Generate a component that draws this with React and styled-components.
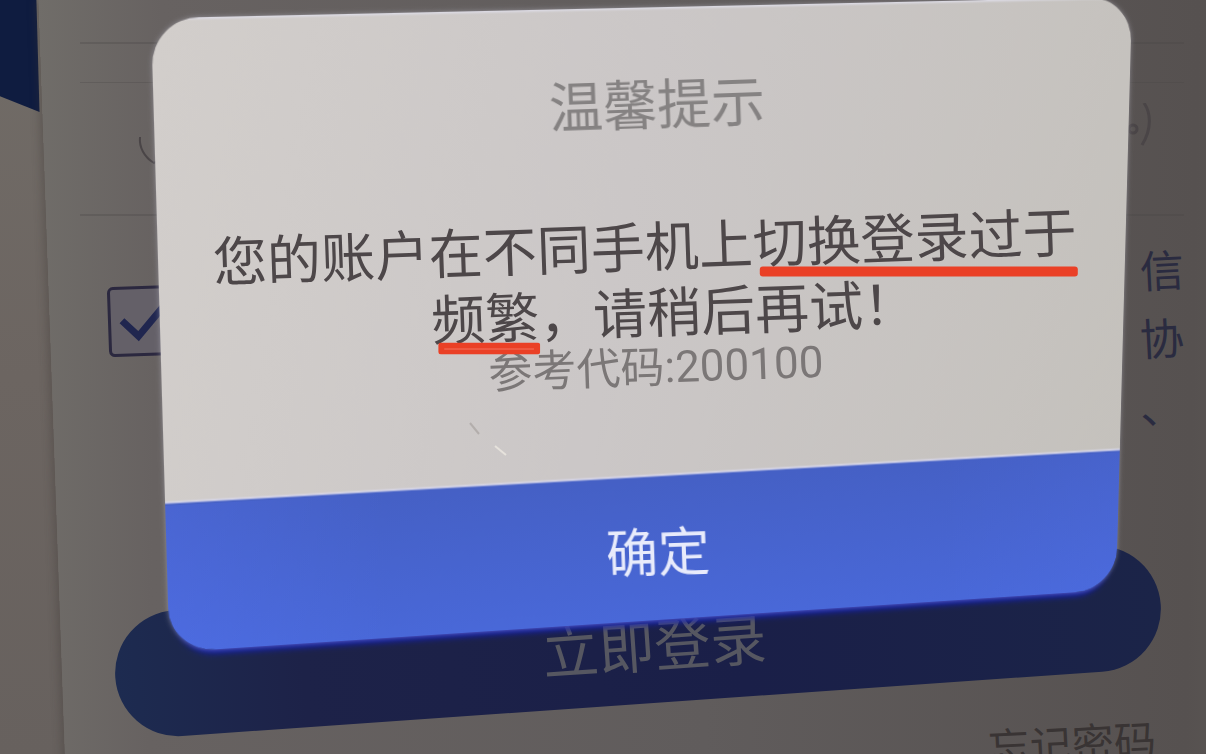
import React from 'react';
import styled, { createGlobalStyle } from 'styled-components';

const GlobalStyle = createGlobalStyle`
    * {
        box-sizing: border-box;
    }
    body {
        margin: 0;
        background: #5f5b5a;
        font-family: Roboto, 'Noto Sans CJK SC', sans-serif;
    }
    h2, p {
        margin: 0;
        font-weight: 400;
    }
    button {
        border: none;
        font-family: inherit;
        cursor: pointer;
    }
`;

const Stage = styled.main`
    position: relative;
    display: grid;
    grid-template-columns: 52px 1fr;
    height: 100vh;
    overflow: hidden;
    background: linear-gradient(180deg, #716c67, #6c6561 50%, #67615e);
`;

const Gutter = styled.div`
    height: 112px;
    background: #0f1c40;
    clip-path: polygon(0 0, 70% 0, 76% 100%, 0 86%);
`;

const LoginPage = styled.section`
    position: relative;
    display: flex;
    flex-direction: column;
    min-width: 0;
    padding: 0 22px 0 28px;

    &::before {
        content: '';
        position: absolute;
        inset: 0 -40px 0 0;
        background: linear-gradient(93deg, #706d69, #676261 10%, #605c5c 55%, #565150 94%, #5c5854);
        box-shadow: -3px 0 8px rgba(60, 54, 52, 0.35);
        transform: skewX(2deg);
    }
    > * {
        position: relative;
    }
`;

const Field = styled.label`
    display: flex;
    align-items: center;
    justify-content: space-between;
    height: ${({ $tall }) => ($tall ? 134 : 44)}px;
    margin-top: ${({ $tall }) => ($tall ? 38 : 0)}px;
    padding: 0 28px 0 56px;
    border-bottom: 2px solid rgba(74, 68, 68, 0.3);
    border-top: ${({ $tall }) => ($tall ? '1px solid rgba(74, 68, 68, 0.3)' : 'none')};
    color: #4a4547;

    input {
        flex: 1;
        min-width: 0;
        border: none;
        outline: none;
        background: none;
        font-size: 42px;
    }
`;

const Agreement = styled.div`
    display: flex;
    align-items: flex-start;
    justify-content: space-between;
    margin-top: 22px;
    padding-left: 28px;
`;

const CheckBox = styled.span`
    display: grid;
    width: 70px;
    height: 70px;
    margin-top: 48px;
    transform: rotate(-2deg);

    > * {
        grid-area: 1 / 1;
        width: 100%;
        height: 100%;
    }
    input {
        appearance: none;
        margin: 0;
        border: 3px solid #2b283f;
        border-radius: 6px;
        background: #646068;
    }
    svg {
        pointer-events: none;
    }
`;

const Terms = styled.label`
    color: #2a2b40;
    font-size: 44px;
    line-height: 68px;
    text-align: right;

    span {
        display: block;
        transform: rotate(-3deg);
    }
`;

const LoginButton = styled.button`
    height: 126px;
    margin: 136px 22px 0 34px;
    padding: 4px 0 0 32px;
    border-radius: 63px;
    background: linear-gradient(90deg, #1d2b50, #1d2248 18%, #1a1f48 60%, #1b2448);
    color: #565761;
    font-size: 56px;
    font-weight: 400;
    transform: rotate(-4deg);
`;

const ForgotLink = styled.a`
    align-self: flex-end;
    margin: 16px 28px 0 0;
    color: #393434;
    font-size: 42px;
    line-height: 52px;
    text-decoration: none;
    white-space: nowrap;
    transform: rotate(-3deg);
`;

const Overlay = styled.div`
    position: absolute;
    inset: 0;
    padding: 12px 64px 0 176px;
`;

const Dialog = styled.div`
    position: relative;
    display: flex;
    flex-direction: column;
    padding-right: 26px;
    text-align: center;

    /* the card is seen at an angle, its text stays flat */
    &::before {
        content: '';
        position: absolute;
        inset: 0;
        border-radius: 44px;
        background:
            linear-gradient(180deg, #dddce6 0, transparent 3px),
            linear-gradient(90deg, rgba(90, 120, 255, 0.22), transparent 22%, transparent 80%, rgba(90, 120, 255, 0.12)) 0 100% / 100% 146px no-repeat,
            linear-gradient(180deg, transparent 463px, #d9d8ea 465px, #4560c5 467px, #4968d8),
            linear-gradient(100deg, #d2cecb, #cbc7c7 45%, #c4c1bc);
        box-shadow: 0 0 5px rgba(190, 190, 205, 0.5), 0 11px 6px -7px #1420b0;
        transform: skewY(-2.2deg) perspective(1200px) rotateX(-4deg) rotateY(5deg);
    }
    > * {
        position: relative;
    }
`;

const Title = styled.h2`
    padding: 60px 0 0 20px;
    color: #858282;
    font-size: 54px;
    line-height: 70px;
    transform: rotate(-2deg);
`;

const Message = styled.p`
    z-index: 1;
    margin-top: 74px;
    color: #4d4749;
    font-size: 54px;
    line-height: 66px;
    white-space: nowrap;
    transform: rotate(-2deg);
`;

const Line = styled.span`
    display: block;
    padding-left: ${({ $indent }) => ($indent ? '1em' : 0)};
`;

const Marked = styled.span`
    position: relative;

    &::after {
        content: '';
        position: absolute;
        z-index: 1;
        top: ${({ $double }) => ($double ? 54 : 59)}px;
        left: 6px;
        right: 0;
        height: ${({ $double }) => ($double ? 12 : 10)}px;
        border-radius: 3px;
        background: ${({ $double }) =>
            $double
                ? 'linear-gradient(#f4705c, #f4705c) 50% 50% / 88% 1px no-repeat #ea4026'
                : '#ea4026'};
        transform: rotate(2deg);
    }
`;

const Code = styled.p`
    padding-left: 20px;
    color: #7b7777;
    font-size: 44px;
    line-height: 40px;
    transform: rotate(-2deg);
`;

const ConfirmButton = styled.button`
    height: 146px;
    margin-top: 92px;
    padding: 0 0 8px 24px;
    background: none;
    color: #e8ebfb;
    font-size: 52px;
    transform: rotate(-2deg);
`;

/* scratch on the glass below the message */
const Scratch = styled.svg`
    && {
        position: absolute;
    }
    top: 66%;
    left: 30%;
    width: 44px;
    height: 40px;
`;

function App() {
    return (
        <>
            <GlobalStyle />
            <Stage>
                <Gutter />
                <LoginPage>
                    <Field>
                        <input type="text" aria-label="账户" />
                    </Field>
                    <Field $tall>
                        <svg width="36" height="44" viewBox="0 0 36 44" fill="none" stroke="currentColor" strokeWidth="2">
                            <path d="M4 10C3 20 8 30 18 36c10-6 16-18 14-26" />
                        </svg>
                        <input type="password" aria-label="密码" />
                        <svg width="36" height="92" viewBox="0 0 36 92" fill="none" stroke="currentColor" strokeWidth="3">
                            <path d="M24 0c7 10 8 26-2 42" />
                            <circle cx="13" cy="26" r="4" />
                        </svg>
                    </Field>
                    <Agreement>
                        <CheckBox>
                            <input id="agree" type="checkbox" defaultChecked />
                            <svg viewBox="0 0 70 70" fill="none" stroke="#20264f" strokeWidth="7">
                                <path d="M14 34l16 16 26-29" />
                            </svg>
                        </CheckBox>
                        <Terms htmlFor="agree">
                            <span>信</span>
                            <span>协</span>
                            <span>、</span>
                        </Terms>
                    </Agreement>
                    <LoginButton type="button">立即登录</LoginButton>
                    <ForgotLink href="#forgot">忘记密码</ForgotLink>
                </LoginPage>
                <Overlay>
                    <Dialog role="alertdialog" aria-labelledby="dialog-title">
                        <Title id="dialog-title">温馨提示</Title>
                        <Message>
                            <Line>
                                您的账户在不同手机上<Marked>切换登录过于</Marked>
                            </Line>
                            <Line $indent>
                                <Marked $double>频繁</Marked>，请稍后再试！
                            </Line>
                        </Message>
                        <Code>参考代码:200100</Code>
                        <Scratch viewBox="0 0 44 40" fill="none" strokeWidth="2">
                            <path d="M4 6l9 11" stroke="#b3aeac" />
                            <path d="M29 29l11 9" stroke="#e6e2dc" />
                        </Scratch>
                        <ConfirmButton type="button">确定</ConfirmButton>
                    </Dialog>
                </Overlay>
            </Stage>
        </>
    );
}

export default App;
